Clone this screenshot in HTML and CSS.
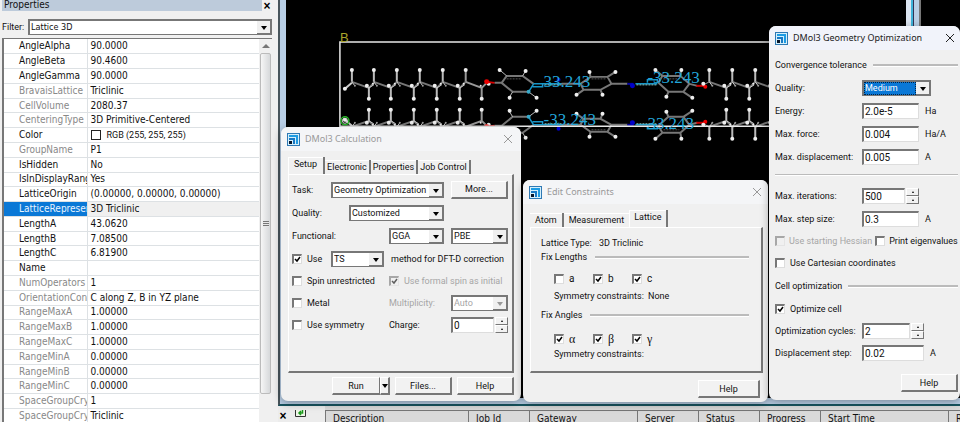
FILE: index.html
```html
<!DOCTYPE html>
<html lang="en">
<head>
<meta charset="utf-8">
<title>DMol3 Calculation</title>
<link rel="stylesheet" href="styles.css">
</head>
<body>
<svg class="defs" aria-hidden="true">
  <symbol id="app" viewBox="0 0 13 13">
    <rect width="13" height="13" fill="#2f79b4"/>
    <rect x="1" y="1" width="11" height="11" fill="#d5effb"/>
    <path d="M2 2h9v9h-2V4H2z" fill="#1d9be3"/>
    <path d="M2 5h6v6h-2V7H2z" fill="#1878c4"/>
    <rect x="2" y="8" width="3" height="3" fill="#06152b"/>
  </symbol>
  <symbol id="close" viewBox="0 0 10 10"><path d="M1 1l8 8M9 1l-8 8" fill="none" stroke="currentColor"/></symbol>
</svg>

<aside class="props">
  <header class="props-head"><span>Properties</span><button class="mini-x" aria-label="Close">×</button></header>
  <div class="filter">
    <label for="filter">Filter:</label>
    <span class="sel"><select id="filter"><option>Lattice 3D</option></select></span>
  </div>
  <div class="grid">
    <table>
      <tbody>
        <tr><th>AngleAlpha</th><td>90.0000</td></tr>
        <tr><th>AngleBeta</th><td>90.4600</td></tr>
        <tr><th>AngleGamma</th><td>90.0000</td></tr>
        <tr class="ro"><th>BravaisLattice</th><td>Triclinic</td></tr>
        <tr class="ro"><th>CellVolume</th><td>2080.37</td></tr>
        <tr class="ro"><th>CenteringType</th><td>3D Primitive-Centered</td></tr>
        <tr><th>Color</th><td class="rgb"><i class="swatch"></i>RGB (255, 255, 255)</td></tr>
        <tr class="ro"><th>GroupName</th><td>P1</td></tr>
        <tr><th>IsHidden</th><td>No</td></tr>
        <tr><th>IsInDisplayRang</th><td>Yes</td></tr>
        <tr><th>LatticeOrigin</th><td>(0.00000, 0.00000, 0.00000)</td></tr>
        <tr class="on"><th>LatticeRepreser</th><td>3D Triclinic</td></tr>
        <tr><th>LengthA</th><td>43.0620</td></tr>
        <tr><th>LengthB</th><td>7.08500</td></tr>
        <tr><th>LengthC</th><td>6.81900</td></tr>
        <tr><th>Name</th><td></td></tr>
        <tr class="ro"><th>NumOperators</th><td>1</td></tr>
        <tr class="ro"><th>OrientationConv</th><td>C along Z, B in YZ plane</td></tr>
        <tr class="ro"><th>RangeMaxA</th><td>1.00000</td></tr>
        <tr class="ro"><th>RangeMaxB</th><td>1.00000</td></tr>
        <tr class="ro"><th>RangeMaxC</th><td>1.00000</td></tr>
        <tr class="ro"><th>RangeMinA</th><td>0.00000</td></tr>
        <tr class="ro"><th>RangeMinB</th><td>0.00000</td></tr>
        <tr class="ro"><th>RangeMinC</th><td>0.00000</td></tr>
        <tr class="ro"><th>SpaceGroupCry</th><td>1</td></tr>
        <tr class="ro"><th>SpaceGroupCry</th><td>Triclinic</td></tr>
      </tbody>
    </table>
    <div class="scroll"><i class="up"></i><div class="thumb"><i class="grip"></i></div></div>
  </div>
</aside>

<main class="work">
  <section class="mdi">
    <div class="view">
      <svg class="scene" viewBox="286 0 621 399" preserveAspectRatio="xMinYMin slice" role="img" aria-label="Crystal cell">
        <defs>
          <g id="unit">
            <path d="M0 82L17 88L23 82" stroke="#777" stroke-width="2"/>
            <path d="M0 82V71M17 88V98" stroke="#bbb" stroke-width="2"/>
            <path d="M17 88l-3-3M17 88l5-3M0 82l3 4" stroke="#ccc"/>
            <g fill="#eee"><circle cy="70" r="2"/><circle cx="17" cy="99" r="2"/><circle cx="15" cy="86" r="2"/><circle cx="21" cy="84" r="1"/></g>
            <circle cx="3" cy="86" r="1" fill="#999"/>
          </g>
          <g id="mol" fill="none">
            <use href="#unit" x="352"/><use href="#unit" x="374"/><use href="#unit" x="397"/><use href="#unit" x="420"/><use href="#unit" x="443"/>
            <path d="M352 83l-7 6" stroke="#ccc" stroke-width="2"/><circle cx="345" cy="89" r="2" fill="#eee"/>
            <path d="M466 82L482 88l5-5M466 82V71M482 88v10" stroke="#999" stroke-width="2"/>
            <g fill="#eee"><circle cx="466" cy="70" r="2"/><circle cx="482" cy="99" r="2"/><circle cx="481" cy="86" r="1"/><circle cx="489" cy="84" r="2"/></g>
            <path d="M487 82l8 1" stroke="#d00" stroke-width="2"/><circle cx="487" cy="82" r="2.500" fill="#e00"/>
            <path d="M495 83l7 0M502 83l5-7h16l11 8M502 83l11 9h16" stroke="#777" stroke-width="2"/>
            <path d="M507 79h14" stroke="#555" stroke-dasharray="2 1"/>
            <path d="M529 92l5-8M534 84h9v3h-10M543 84h20" stroke="#1796c8" stroke-width="1.500"/>
            <path d="M545 85h18" stroke="#8cc" stroke-dasharray="2 1"/>
            <path d="M507 76l-7-6M523 76l3-5M513 92l-3 5M529 92l8 6" stroke="#bbb"/>
            <g fill="#eee"><circle cx="500" cy="70" r="2"/><circle cx="526" cy="71" r="2"/><circle cx="510" cy="98" r="2"/><circle cx="537" cy="98" r="2"/></g>
            <circle cx="559" cy="80" r="2" fill="#00c"/><circle cx="529" cy="92" r="2" fill="#38a9c9"/>
            <path d="M562 84h19l10-7h17l4 7-11 6h-17l-3-6M612 84h16M591 77l-1-5M608 77l8-5M584 90l-7 5M601 90l2 5" stroke="#777" stroke-width="2"/>
            <path d="M592 79h15" stroke="#555" stroke-dasharray="2 1"/>
            <g fill="#eee"><circle cx="590" cy="72" r="2"/><circle cx="616" cy="72" r="2"/><circle cx="577" cy="95" r="2"/><circle cx="603" cy="95" r="2"/></g>
            <path d="M628 84h6" stroke="#00a" stroke-width="2"/><circle cx="633" cy="86" r="2.500" fill="#00c"/>
            <path d="M636 84h22M648 83v-3h10v3" stroke="#1796c8" stroke-width="1.500"/><path d="M637 85h20" stroke="#8cc" stroke-dasharray="2 1"/>
            <path d="M659 83l4-7h18l9 8-6 8h-15l-10-9M690 84l8 2M663 76l-7-6M681 76l1-6M669 92l-2 5M684 92l9 6" stroke="#777" stroke-width="2"/>
            <path d="M664 79h16" stroke="#555" stroke-dasharray="2 1"/>
            <g fill="#eee"><circle cx="656" cy="70" r="2"/><circle cx="682" cy="70" r="2"/><circle cx="667" cy="97" r="2"/><circle cx="693" cy="98" r="2"/></g>
            <path d="M697 86h8" stroke="#c00" stroke-width="2"/><path d="M704 85l6-3" stroke="#999"/><circle cx="706" cy="87" r="2" fill="#e00"/><circle cx="704" cy="84" r="2" fill="#eee"/>
            <use href="#unit" x="710"/><use href="#unit" x="733"/><use href="#unit" x="756"/>
          </g>
        </defs>
        <use href="#mol"/>
        <use href="#mol" transform="translate(0 209) scale(1 -1)"/>
        <path d="M340 130V42H780M340 126.500H780" fill="none" stroke="#e8e8e8" stroke-width="1.500"/>
        <circle cx="345" cy="121" r="4" fill="none" stroke="#2ab52a" stroke-width="1.500"/>
        <circle cx="345" cy="121" r="2.500" fill="none" stroke="#ddd"/>
        <text class="axis" x="340" y="42">B</text>
        <g class="charge"><text x="544" y="87">33.243</text><text x="648" y="83">-33.243</text><text x="544" y="125">-33.243</text><text x="648" y="129">33.243</text></g>
      </svg>
    </div>
    <div class="splitter"></div>
    <div class="view side"></div>
  </section>

  <section class="jobs">
    <div class="jobs-tools"><button class="mini-x" aria-label="Close jobs">×</button>
      <svg width="11" height="8" viewBox="0 0 11 8" aria-hidden="true"><path d="M0 0h11v7H0z" fill="#eef6e8"/><path d="M.5 0v6.500h10V0" fill="none" stroke="#333"/><path d="M7.500 0v3H4M6 1L4 3l2 2" fill="none" stroke="#1c9a1c" stroke-width="1.500"/></svg>
    </div>
    <table>
      <colgroup><col class="c-desc"><col class="c-job"><col class="c-gate"><col class="c-s"><col class="c-s"><col class="c-s"><col class="c-start"><col></colgroup>
      <thead><tr><th>Description</th><th>Job Id</th><th>Gateway</th><th>Server</th><th>Status</th><th>Progress</th><th>Start Time</th><th>R</th></tr></thead>
    </table>
  </section>
</main>

<section class="dlg dlg-calc" aria-label="DMol3 Calculation">
  <header class="bar"><svg class="ic"><use href="#app"/></svg><h2>DMol3 Calculation</h2><button class="x" aria-label="Close"><svg><use href="#close"/></svg></button></header>
  <nav class="tabs"><button class="tab cur">Setup</button><button class="tab">Electronic</button><button class="tab">Properties</button><button class="tab">Job Control</button></nav>
  <div class="pane">
    <div class="row"><label class="w-task" for="task">Task:</label><span class="sel grow"><select id="task"><option>Geometry Optimization</option></select></span><button class="btn">More...</button></div>
    <div class="row"><label class="w-qual" for="q1">Quality:</label><span class="sel grow"><select id="q1"><option>Customized</option></select></span><span class="hole"></span></div>
    <div class="row"><label class="w-half" for="fun">Functional:</label><span class="sel grow"><select id="fun"><option>GGA</option></select></span><span class="sel third"><select aria-label="Functional type"><option>PBE</option></select></span></div>
    <div class="row"><label class="w-task chk"><input type="checkbox" checked>Use</label><span class="sel w-ts"><select aria-label="Dispersion method"><option>TS</option></select></span><span>method for DFT-D correction</span></div>
    <div class="row low"><label class="w-half chk"><input type="checkbox">Spin unrestricted</label><label class="chk off"><input type="checkbox" checked disabled>Use formal spin as initial</label></div>
    <div class="row low"><label class="w-half chk"><input type="checkbox">Metal</label><label class="off grow" for="mult">Multiplicity:</label><span class="sel third off"><select id="mult" disabled><option>Auto</option></select></span></div>
    <div class="row low"><label class="w-half chk"><input type="checkbox">Use symmetry</label><label class="grow" for="chg">Charge:</label><span class="num third"><input id="chg" value="0"><span class="spin"><button aria-label="Up"></button><button aria-label="Down"></button></span></span></div>
  </div>
  <footer class="foot"><span class="split"><button class="btn run">Run</button><button class="btn more" aria-label="Run options"></button></span><button class="btn">Files...</button><button class="btn">Help</button></footer>
</section>

<section class="dlg dlg-cons" aria-label="Edit Constraints">
  <header class="bar"><svg class="ic"><use href="#app"/></svg><h2>Edit Constraints</h2><button class="x" aria-label="Close"><svg><use href="#close"/></svg></button></header>
  <nav class="tabs"><button class="tab">Atom</button><button class="tab last">Measurement</button><button class="tab cur">Lattice</button></nav>
  <div class="pane">
    <div class="line type"><span class="w-type">Lattice Type:</span><span>3D Triclinic</span></div>
    <div class="legend">Fix Lengths</div>
    <div class="checks"><label class="chk"><input type="checkbox">a</label><label class="chk"><input type="checkbox" checked>b</label><label class="chk"><input type="checkbox" checked>c</label></div>
    <div class="line sym"><span class="w-sym">Symmetry constraints:</span><span>None</span></div>
    <div class="legend second">Fix Angles</div>
    <div class="checks greek"><label class="chk"><input type="checkbox" checked>α</label><label class="chk"><input type="checkbox" checked>β</label><label class="chk"><input type="checkbox" checked>γ</label></div>
    <div class="line sym"><span class="w-sym">Symmetry constraints:</span></div>
  </div>
  <footer class="foot"><button class="btn">Help</button></footer>
</section>

<section class="dlg dlg-geom" aria-label="DMol3 Geometry Optimization">
  <header class="bar"><svg class="ic"><use href="#app"/></svg><h2>DMol3 Geometry Optimization</h2><button class="x" aria-label="Close"><svg><use href="#close"/></svg></button></header>
  <div class="body">
    <div class="legend">Convergence tolerance</div>
    <div class="row"><label class="w-f" for="q2">Quality:</label><span class="sel hot w-hot"><select id="q2"><option>Medium</option></select></span></div>
    <div class="row"><label class="w-f" for="en">Energy:</label><input class="txt" id="en" value="2.0e-5"><span>Ha</span></div>
    <div class="row"><label class="w-f" for="mf">Max. force:</label><input class="txt" id="mf" value="0.004"><span>Ha/A</span></div>
    <div class="row"><label class="w-f" for="md">Max. displacement:</label><input class="txt" id="md" value="0.005"><span>A</span></div>
    <hr>
    <div class="row"><label class="w-f" for="mi">Max. iterations:</label><span class="num third"><input id="mi" value="500"><span class="spin"><button aria-label="Up"></button><button aria-label="Down"></button></span></span></div>
    <div class="row"><label class="w-f" for="ms">Max. step size:</label><input class="txt" id="ms" value="0.3"><span>A</span></div>
    <div class="row low pair"><label class="chk off"><input type="checkbox" disabled>Use starting Hessian</label><label class="chk"><input type="checkbox">Print eigenvalues</label></div>
    <div class="row low"><label class="chk"><input type="checkbox">Use Cartesian coordinates</label></div>
    <div class="legend tall">Cell optimization</div>
    <div class="row low"><label class="chk"><input type="checkbox" checked>Optimize cell</label></div>
    <div class="row low"><label class="w-f" for="oc">Optimization cycles:</label><span class="num wide"><input id="oc" value="2"><span class="spin"><button aria-label="Up"></button><button aria-label="Down"></button></span></span></div>
    <div class="row low"><label class="w-f" for="ds">Displacement step:</label><input class="txt wide" id="ds" value="0.02"><span>A</span></div>
  </div>
  <footer class="foot"><button class="btn">Help</button></footer>
</section>
</body>
</html>
```
FILE: styles.css
```css
* { box-sizing: border-box; }
body {
  margin: 0;
  height: 100vh;
  overflow: hidden;
  display: flex;
  background: #f0f0f0;
  color: #111;
  font: 9px/14px Roboto, "Liberation Sans", sans-serif;
}
button, input, select { font: inherit; color: inherit; padding: 0; margin: 0; border-radius: 0; }
button { background: none; border: 0; }
.defs { position: absolute; width: 0; height: 0; }

/* Properties panel */
.props { flex: 0 0 278px; display: flex; flex-direction: column; padding-right: 6px; font-family: "DejaVu Sans Condensed", "Noto Sans", sans-serif; font-size: 10px; min-height: 0; }
.props-head { display: flex; justify-content: space-between; align-items: center; height: 11px; padding-left: 2px; line-height: 10px; }
.props-head span { flex: 1; background: #bdcbdb; padding-left: 2px; height: 11px; }
.mini-x { width: 10px; font: bold 12px/10px "Liberation Sans", sans-serif; color: #000; }
.filter { display: flex; align-items: center; height: 27px; padding: 4px 0 0 2px; font-family: Roboto, sans-serif; font-size: 9px; }
.filter label { flex: 0 0 26px; }
.filter .sel { flex: 1; }
.filter select { font-family: "DejaVu Sans Condensed", sans-serif; }
.grid { flex: 1; min-height: 0; display: flex; margin-left: 2px; border: 1px solid #777; border-width: 1px 0 0 2px; background: #fff; }
.grid table { flex: 1; width: 254px; height: calc(100% + 2px); table-layout: fixed; border-collapse: collapse; }
.grid th, .grid td { padding: 0 0 0 3px; font-weight: 400; text-align: left; white-space: nowrap; overflow: hidden; border-bottom: 1px solid #dde1e4; line-height: 12px; height: 14px; }
.grid th { width: 83px; padding-left: 15px; border-right: 1px solid #dde1e4; }
.grid .ro th { color: #888; }
.grid .on th { background: #0a78d6; color: #e8f4ff; }
.grid .on td { background: #f0f0f0; }
.grid .rgb { font-family: Roboto, sans-serif; font-size: 9px; }
.swatch { display: inline-block; width: 10px; height: 10px; border: 1px solid #222; margin-right: 6px; vertical-align: -2px; }
.scroll { flex: 0 0 13px; background: #f0f0f0; display: flex; flex-direction: column; align-items: center; }
.up { border: 4px solid transparent; border-top: 0; border-bottom-color: #777; margin: 5px 0; }
.thumb { width: 11px; height: calc(100% - 42px); background: linear-gradient(90deg, #f6f6f6, #d6d8da); border: 1px solid #bbb; border-radius: 2px; display: flex; justify-content: center; align-items: center; }
.grip { width: 6px; height: 6px; background: repeating-linear-gradient(#777 0 1px, #e8e8e8 1px 2px); }

/* Work area */
.work { flex: 1; min-width: 0; display: flex; flex-direction: column; }
.mdi { flex: 1; min-height: 0; display: flex; border: 2px solid #48555c; border-width: 0 0 2px 2px; border-bottom-color: #17545f; background: #b9cfe6; padding: 0 0 6px 6px; }
.view { flex: 1; background: #000; overflow: hidden; }
.view.side { flex: 0 0 39px; }
.splitter { flex: 0 0 15px; background: linear-gradient(90deg, #dde6f2 0 5px, #3fb4da 5px 7px, #335 7px 8px, #b9cfe6 8px 13px, #777 13px); }
.scene { display: block; width: 100%; height: 100%; }
.axis { font: 13px "Liberation Sans", sans-serif; fill: #a9a52a; }
.charge { font: 17px "Liberation Serif", serif; fill: #22a5d8; }
.jobs { flex: 0 0 16px; overflow: hidden; display: flex; background: #d9d9d9; font: 10px/14px "DejaVu Sans Condensed", sans-serif; }
.jobs-tools { flex: 0 0 47px; display: flex; gap: 7px; padding: 4px 0 0; background: #ececec; }
.jobs table { flex: 1; width: 635px; margin-top: 4px; table-layout: fixed; border-collapse: collapse; border-top: 1px solid #777; }
.jobs th { font-weight: 400; text-align: left; padding: 1px 0 0 7px; border-left: 1px solid #777; white-space: nowrap; overflow: hidden; }
.c-desc { width: 143px; } .c-job { width: 61px; } .c-gate { width: 108px; } .c-s { width: 61px; } .c-start { width: 128px; }

/* Floating dialogs */
.dlg { position: absolute; display: flex; flex-direction: column; background: #f0f0f0; border-radius: 7px; box-shadow: 0 2px 9px rgba(0, 0, 0, .35); overflow: hidden; }
.dlg-calc { left: 281px; top: 127px; width: 240px; height: 274px; padding: 0 7px 6px; }
.dlg-cons { left: 523px; top: 180px; width: 245px; height: 222px; padding: 0 5px 4px 7px; }
.dlg-geom { left: 769px; top: 26px; right: 0; height: 374px; padding: 0 2px 6px 6px; }
.bar { display: flex; align-items: center; height: 24px; margin: 0 -7px; padding: 0 8px 0 6px; background: #f4f5f7; color: #999; }
.dlg-geom .bar { margin: 0 -2px 0 -6px; color: #222; padding: 0 5px 0 6px; background: #f1f3fa; }
.ic { width: 13px; height: 13px; }
.bar h2 { flex: 1; margin: 0 0 0 5px; font: 9px/14px "Noto Sans", "Open Sans", sans-serif; white-space: nowrap; }
.x svg { display: block; width: 10px; height: 10px; }
.tabs { display: flex; align-items: flex-end; height: 23px; }
.tab { height: 14px; padding: 0 2px; border-right: 2px solid #777; box-shadow: inset 0 1px #fff; }
.tab.cur { height: 17px; padding: 0 6px 3px; box-shadow: inset 1px 1px #fff; }
.dlg-cons .tab { padding-left: 5px; padding-right: 5px; }
.tab.last { border-right: 0; }
.pane { flex: 1; border: 1px solid #fff; border-right: 2px solid #777; border-bottom: 2px solid #777; padding: 3px 4px 0 3px; }
.row { display: flex; align-items: center; height: 23px; gap: 0; white-space: nowrap; }
.row.low { height: 22px; }
.grow { flex: 1; }
.third, .hole { flex: 0 0 57px; }
.row .btn, .row .third, .row .hole { margin-left: 7px; }
.w-task { flex: 0 0 39px; } .w-qual { flex: 0 0 57px; } .w-half { flex: 0 0 97px; }
.w-ts { flex: 0 0 53px; margin-right: 7px; }
.off { color: #a6a6a6; }

.btn { flex: 0 0 57px; height: 18px; background: #f2f2f2; border: 1px solid #fff; border-right: 2px solid #777; border-bottom: 2px solid #777; }
.foot { display: flex; justify-content: flex-end; gap: 5px; margin-top: 4px; }
.dlg-cons .foot { margin: 7px 3px 0 0; }
.dlg-cons .foot .btn { flex-basis: 62px; }
.split { display: flex; }
.run { flex-basis: 48px; border-right-width: 1px; }
.more { flex-basis: 10px; display: flex; align-items: center; justify-content: center; }
.more::before, .sel::after { content: ""; border: 3px solid transparent; border-bottom: 0; border-top: 4px solid #000; width: 0; height: 0; }

.sel { position: relative; display: block; height: 16px; background: #fff; border: 1px solid #777; border-top-width: 2px; border-left-width: 2px; }
.sel select { display: block; width: 100%; height: 13px; appearance: none; border: 0; background: transparent; padding-left: 1px; line-height: 13px; opacity: 1; }
.sel::before { content: ""; position: absolute; right: 0; top: 0; bottom: 0; width: 13px; background: #f0f0f0; border-right: 1px solid #777; border-bottom: 1px solid #777; pointer-events: none; }
.sel::after { position: absolute; right: 4px; top: 5px; pointer-events: none; }
.sel.off::after { border-top-color: #999; }
.sel.hot select { width: calc(100% - 14px); background: #0a78d6; color: #fff; outline: 1px dotted #024; outline-offset: -1px; }
.w-hot { flex: 0 0 69px; }

.txt, .num input { height: 16px; min-width: 0; background: #fff; border: 1px solid #ddd; border-top: 2px solid #777; border-left: 2px solid #777; padding-left: 1px; }
.txt { flex: 0 0 57px; width: 57px; margin-right: 6px; }
.num { display: flex; gap: 1px; }
.num input { flex: 1; width: 20px; }
.txt, .num input { font-size: 10px; }
.spin { flex: 0 0 13px; display: flex; flex-direction: column; }
.spin button { height: 8px; background: #f2f2f2; border: 1px solid #fff; border-right-color: #777; border-bottom-color: #777; display: flex; align-items: center; justify-content: center; }
.spin button::before { content: ""; border: 1px solid transparent; border-top: 0; border-bottom: 2px solid #000; }
.num.wide { flex: 0 0 62px; }
.txt.wide { flex: 0 0 62px; }

.chk { display: flex; align-items: center; gap: 5px; }
.chk input { appearance: none; flex: 0 0 10px; height: 10px; background: #fff; border: 1px solid #ddd; border-top: 2px solid #777; border-left: 2px solid #777; }
.chk input:checked { background: #fff url("data:image/svg+xml,%3Csvg xmlns='http://www.w3.org/2000/svg' viewBox='0 0 7 7'%3E%3Cpath d='M1 3l2 2 3-4' fill='none' stroke='%23000' stroke-width='1.500'/%3E%3C/svg%3E") center / 7px 7px no-repeat; }
.chk.off input { background-color: #f0f0f0; opacity: .6; }

.legend { display: flex; align-items: center; gap: 6px; height: 22px; white-space: nowrap; }
.legend::after { content: ""; flex: 1; height: 2px; background: #bbb; border-bottom: 1px solid #fff; }
.legend.tall { height: 24px; }
.dlg-cons .legend { height: 14px; gap: 8px; padding-right: 8px; }
.dlg-cons .legend.second { margin-top: 5px; }
.dlg-cons .pane { padding: 8px 4px 0 10px; }
.line { display: flex; height: 14px; white-space: nowrap; }
.w-type { flex: 0 0 58px; } .w-sym { flex: 0 0 94px; }
.sym { padding-left: 13px; }
.checks { display: flex; height: 25px; padding: 4px 0 0 13px; font-size: 10px; }
.checks .chk { flex: 0 0 39px; }
.greek { height: 24px; margin-top: 1px; padding-top: 8px; font-family: "Liberation Serif", serif; font-size: 12px; }

.dlg-geom .body { padding-top: 4px; }
.dlg-geom hr { margin: 6px 0 8px; border: 0; height: 2px; background: #bbb; border-bottom: 1px solid #fff; }
.w-f { flex: 0 0 87px; }
.dlg-geom .row .third { margin-left: 0; }
.pair { gap: 3px; }
.pair .chk { gap: 4px; }
.dlg-geom .foot { margin-top: 10px; }
```
